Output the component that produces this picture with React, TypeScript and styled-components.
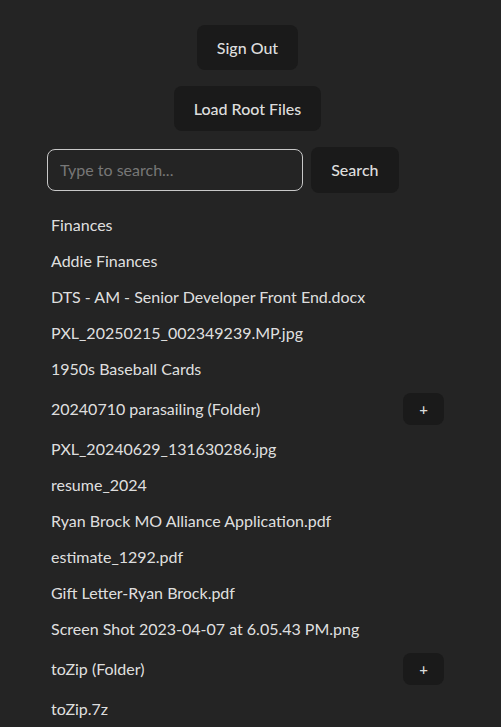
import React from 'react';
import styled, { createGlobalStyle } from 'styled-components';

const GlobalStyle = createGlobalStyle`
  html, body {
    margin: 0;
    padding: 0;
    background: #242424;
  }
  body {
    color: rgba(255, 255, 255, 0.87);
    font-family: "Segoe UI", Lato, "Open Sans", sans-serif;
    font-size: 16px;
    line-height: 1.5;
    -webkit-font-smoothing: antialiased;
  }
`;

const Page = styled.div`
  width: 401px;
  margin: 0 0 0 47px;
  padding-top: 25px;
  display: flex;
  flex-direction: column;
  align-items: center;
`;

const Button = styled.button<{ $small?: boolean }>`
  border-radius: 8px;
  border: 1px solid transparent;
  background: #1a1a1a;
  color: rgba(255, 255, 255, 0.87);
  font-family: inherit;
  font-size: ${p => (p.$small ? '15px' : '16px')};
  font-weight: 500;
  line-height: ${p => (p.$small ? '20px' : '24px')};
  padding: ${p => (p.$small ? '5px 15px' : '9.6px 19.2px')};
  cursor: pointer;
  flex-shrink: 0;
`;

const TopButton = styled(Button)`
  margin-bottom: 16px;
`;

const SearchRow = styled.div`
  align-self: stretch;
  display: flex;
  align-items: center;
  gap: 8px;
`;

const SearchInput = styled.input`
  width: 256px;
  height: 42px;
  box-sizing: border-box;
  border: 1px solid #c8c8c8;
  border-radius: 8px;
  background: #242424;
  color: rgba(255, 255, 255, 0.87);
  font-family: inherit;
  font-size: 16px;
  padding: 0 12px;
  outline: none;

  &::placeholder {
    color: #777777;
  }
`;

const FileList = styled.ul`
  align-self: stretch;
  list-style: none;
  margin: 14px 0 0;
  padding: 0;
`;

const FileRow = styled.li`
  display: flex;
  align-items: center;
  justify-content: space-between;
  padding: 6px 4px;
  line-height: 24px;
`;

type Item = { name: string; folder?: boolean };

const files: Item[] = [
  { name: 'Finances' },
  { name: 'Addie Finances' },
  { name: 'DTS - AM - Senior Developer Front End.docx' },
  { name: 'PXL_20250215_002349239.MP.jpg' },
  { name: '1950s Baseball Cards' },
  { name: '20240710 parasailing', folder: true },
  { name: 'PXL_20240629_131630286.jpg' },
  { name: 'resume_2024' },
  { name: 'Ryan Brock MO Alliance Application.pdf' },
  { name: 'estimate_1292.pdf' },
  { name: 'Gift Letter-Ryan Brock.pdf' },
  { name: 'Screen Shot 2023-04-07 at 6.05.43 PM.png' },
  { name: 'toZip', folder: true },
  { name: 'toZip.7z' },
];

export default function App() {
  return (
    <>
      <GlobalStyle />
      <Page>
        <TopButton>Sign Out</TopButton>
        <TopButton>Load Root Files</TopButton>
        <SearchRow>
          <SearchInput placeholder="Type to search..." />
          <Button>Search</Button>
        </SearchRow>
        <FileList>
          {files.map(f => (
            <FileRow key={f.name}>
              <span>{f.folder ? `${f.name} (Folder)` : f.name}</span>
              {f.folder && <Button $small>+</Button>}
            </FileRow>
          ))}
        </FileList>
      </Page>
    </>
  );
}
